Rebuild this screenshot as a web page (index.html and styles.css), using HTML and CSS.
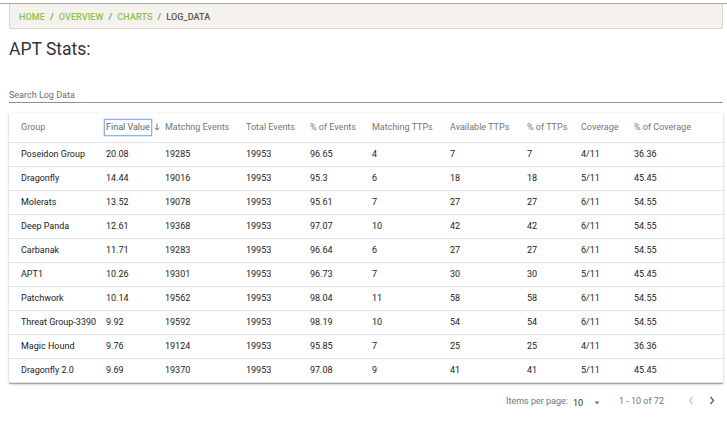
FILE: index.html
```html
<!DOCTYPE html>
<html>
<head>
<meta charset="utf-8">
<link rel="stylesheet" href="styles.css">
</head>
<body>
<div class="topbar"></div>
<nav class="crumbs">
  <a class="crumb">HOME</a><span class="sep">/</span><a class="crumb">OVERVIEW</a><span class="sep">/</span><a class="crumb">CHARTS</a><span class="sep">/</span><span class="current">LOG_DATA</span>
</nav>
<h1 class="title">APT Stats:</h1>
<div class="search">
  <span class="placeholder">Search Log Data</span>
</div>
<div class="card">
  <table class="grid">
    <colgroup>
      <col class="c0"><col class="c1"><col class="c2"><col class="c3"><col class="c4"><col class="c5"><col class="c6"><col class="c7"><col class="c8"><col class="c9">
    </colgroup>
    <thead>
      <tr>
        <th>Group</th>
        <th><span class="sorted">Final Value</span><svg class="sort" width="6" height="8" viewBox="0 0 6 8"><path d="M3 0.5V7M0.8 4.8L3 7L5.2 4.8" fill="none" stroke="#757575" stroke-width="1"/></svg></th>
        <th>Matchng Events</th>
        <th>Total Events</th>
        <th>% of Events</th>
        <th>Matching TTPs</th>
        <th>Available TTPs</th>
        <th>% of TTPs</th>
        <th>Coverage</th>
        <th>% of Coverage</th>
      </tr>
    </thead>
    <tbody>
      <tr><td>Poseidon Group</td><td>20.08</td><td>19285</td><td>19953</td><td>96.65</td><td>4</td><td>7</td><td>7</td><td>4/11</td><td>36.36</td></tr>
      <tr><td>Dragonfly</td><td>14.44</td><td>19016</td><td>19953</td><td>95.3</td><td>6</td><td>18</td><td>18</td><td>5/11</td><td>45.45</td></tr>
      <tr><td>Molerats</td><td>13.52</td><td>19078</td><td>19953</td><td>95.61</td><td>7</td><td>27</td><td>27</td><td>6/11</td><td>54.55</td></tr>
      <tr><td>Deep Panda</td><td>12.61</td><td>19368</td><td>19953</td><td>97.07</td><td>10</td><td>42</td><td>42</td><td>6/11</td><td>54.55</td></tr>
      <tr><td>Carbanak</td><td>11.71</td><td>19283</td><td>19953</td><td>96.64</td><td>6</td><td>27</td><td>27</td><td>6/11</td><td>54.55</td></tr>
      <tr><td>APT1</td><td>10.26</td><td>19301</td><td>19953</td><td>96.73</td><td>7</td><td>30</td><td>30</td><td>5/11</td><td>45.45</td></tr>
      <tr><td>Patchwork</td><td>10.14</td><td>19562</td><td>19953</td><td>98.04</td><td>11</td><td>58</td><td>58</td><td>6/11</td><td>54.55</td></tr>
      <tr><td>Threat Group-3390</td><td>9.92</td><td>19592</td><td>19953</td><td>98.19</td><td>10</td><td>54</td><td>54</td><td>6/11</td><td>54.55</td></tr>
      <tr><td>Magic Hound</td><td>9.76</td><td>19124</td><td>19953</td><td>95.85</td><td>7</td><td>25</td><td>25</td><td>4/11</td><td>36.36</td></tr>
      <tr><td>Dragonfly 2.0</td><td>9.69</td><td>19370</td><td>19953</td><td>97.08</td><td>9</td><td>41</td><td>41</td><td>5/11</td><td>45.45</td></tr>
    </tbody>
  </table>
</div>
<div class="pager">
  <span class="ipp">Items per page:</span>
  <span class="select"><span class="val">10</span><svg width="6" height="4" viewBox="0 0 6 4"><path d="M0.5 0.5H5.5L3 3.5Z" fill="#757575"/></svg></span>
  <span class="range">1 - 10 of 72</span>
  <span class="nav">
    <svg width="6" height="9" viewBox="0 0 6 9"><path d="M4.5 1L1.5 4.5L4.5 8" fill="none" stroke="#c4c4c4" stroke-width="1.2"/></svg>
    <svg width="6" height="9" viewBox="0 0 6 9"><path d="M1.5 1L4.5 4.5L1.5 8" fill="none" stroke="#555" stroke-width="1.2"/></svg>
  </span>
</div>
</body>
</html>
```

FILE: styles.css
```css
* { box-sizing: border-box; }
html, body { margin: 0; padding: 0; background: #fff; }
body {
  font-family: Roboto, "Liberation Sans", Arial, sans-serif;
  color: rgba(0,0,0,0.87);
  width: 727px;
}
.topbar {
  height: 4px;
  border-bottom: 1px solid #a9a9a9;
  width: 727px;
}
.crumbs {
  margin: 0 4px 0 9px;
  height: 25px;
  background: #f5f2ed;
  border: 1px solid #ddd3c7;
  border-top: none;
  border-radius: 0 0 2px 2px;
  display: flex;
  align-items: center;
  padding-left: 9px;
  padding-top: 1px;
  font-size: 9px;
  font-weight: 500;
  letter-spacing: 0.1px;
}
.crumb { color: #8bc34a; }
.sep { color: #666; padding: 0 5px; font-weight: 400; }
.current { color: #555; }
.title {
  margin: 9px 0 0 9px;
  font-size: 17.5px;
  font-weight: 400;
  line-height: 22px;
  color: #333;
}
.search {
  margin: 30px 4px 0 9px;
  height: 13px;
  border-bottom: 1px solid #8e8e8e;
  font-size: 9px;
  line-height: 10px;
}
.placeholder { color: #6e6e6e; }
.card {
  margin: 10px 4px 0 9px;
  background: #fff;
  box-shadow: 0 1px 3px rgba(0,0,0,0.2), 0 1px 1px rgba(0,0,0,0.14), 0 2px 1px -1px rgba(0,0,0,0.12);
}
.grid {
  width: 714px;
  table-layout: fixed;
  border-collapse: collapse;
  font-size: 9px;
}
.c0 { width: 97px; }
.c1 { width: 59px; }
.c2 { width: 81px; }
.c3 { width: 64px; }
.c4 { width: 62px; }
.c5 { width: 78px; }
.c6 { width: 77px; }
.c7 { width: 54px; }
.c8 { width: 53px; }
.c9 { width: 89px; }
.grid th {
  height: 29px;
  text-align: left;
  font-weight: 400;
  color: #757575;
  padding: 0;
  border-bottom: 1px solid #e0e0e0;
  white-space: nowrap;
  vertical-align: middle;
}
.grid td {
  height: 24px;
  padding: 0;
  border-bottom: 1px solid #e0e0e0;
  white-space: nowrap;
  vertical-align: middle;
  color: #222;
}
.grid th:first-child, .grid td:first-child { padding-left: 12px; }
.sorted {
  display: inline-block;
  margin-left: -2px;
  padding: 0 1px;
  height: 17px;
  line-height: 15px;
  border: 1px solid #8fb3ee;
  box-shadow: 0 0 0 0.5px #b7cff5;
  color: #5f6368;
}
.sort { margin-left: 2px; vertical-align: -1px; }
.pager {
  display: flex;
  justify-content: flex-end;
  align-items: center;
  margin: 11px 0 0 0;
  padding-right: 12px;
  font-size: 9px;
  color: #757575;
  height: 14px;
}
.ipp { margin-right: 5px; }
.select {
  display: flex;
  align-items: center;
  justify-content: space-between;
  width: 28px;
  height: 16px;
  border-bottom: 1px solid #8a8a8a;
  padding-top: 2px;
  margin-top: 4px;
  color: #333;
}
.select svg { margin-right: 1px; }
.range { margin-left: 18px; }
.nav { display: flex; gap: 15px; margin-left: 24px; }
```
